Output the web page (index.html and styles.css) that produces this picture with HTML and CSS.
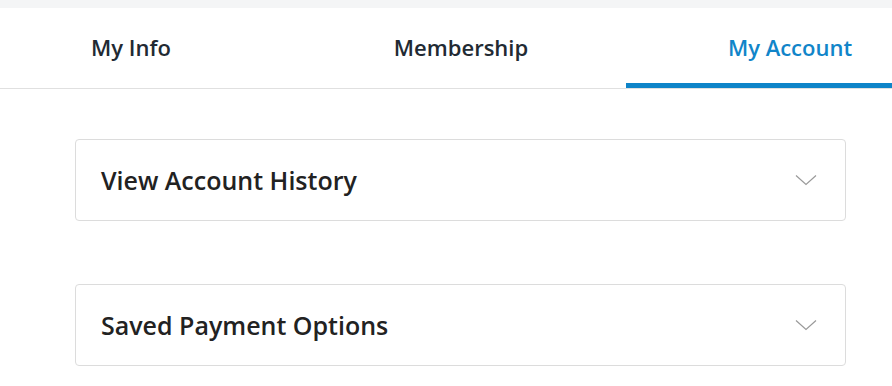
FILE: index.html
```html
<!DOCTYPE html>
<html lang="en">
<head>
<meta charset="UTF-8">
<meta name="viewport" content="width=device-width, initial-scale=1.0">
<title>My Account</title>
<link rel="stylesheet" href="styles.css">
</head>
<body>

<div class="topbar"></div>

<nav class="tabs">
<div class="tab first">My Info</div>
<div class="tab">Membership</div>
<div class="tab last active">My Account</div>
</nav>

<section class="panels">

<div class="panel">
<h3>View Account History</h3>
<svg class="chevron" width="22" height="12" viewBox="0 0 22 12"><path d="M1 1.5 L11 10.5 L21 1.5" fill="none" stroke="#9a9a9a" stroke-width="1.2"/></svg>
</div>

<div class="panel">
<h3>Saved Payment Options</h3>
<svg class="chevron" width="22" height="12" viewBox="0 0 22 12"><path d="M1 1.5 L11 10.5 L21 1.5" fill="none" stroke="#9a9a9a" stroke-width="1.2"/></svg>
</div>

</section>

</body>
</html>
```

FILE: styles.css
```css
/* ---------- GLOBAL ---------- */
*{margin:0;padding:0;box-sizing:border-box;}
body{font-family:'Open Sans',sans-serif;background:#fff;color:#222;}

/* ---------- TOP ---------- */
.topbar{height:8px;background:#f4f5f6;}

/* ---------- TABS ---------- */
.tabs{
display:grid;
grid-template-columns:296px 330px 1fr;
height:81px;
border-bottom:1px solid #e0e0e0;
}
.tab{
display:flex;
align-items:center;
justify-content:center;
font-size:22px;
font-weight:560;
color:#222a33;
padding-top:2px;
border-bottom:5px solid transparent;
}
.tab.first{padding-right:34px;}
.tab.last{padding-left:62px;}
.tab.active{color:#1185c9;border-bottom-color:#0e84c8;}

/* ---------- PANELS ---------- */
.panels{
display:flex;
flex-direction:column;
gap:63px;
padding:50px 46px 0 75px;
}
.panel{
height:82px;
border:1px solid #dcdcdc;
border-radius:4px;
display:flex;
align-items:center;
justify-content:space-between;
padding:0 28px 0 25px;
}
.panel h3{font-size:25px;font-weight:600;color:#222;}
.chevron{display:block;}
```
